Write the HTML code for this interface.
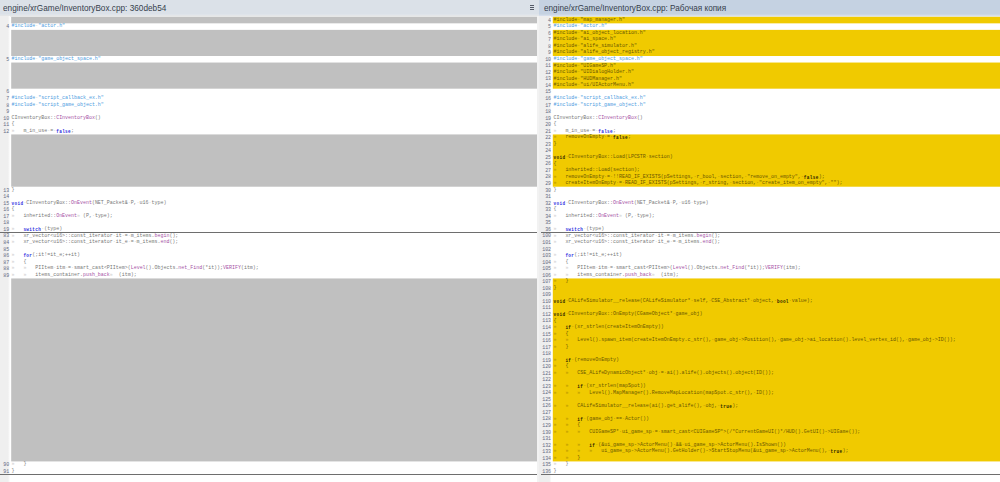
<!DOCTYPE html><html><head><meta charset="utf-8"><style>
html,body{margin:0;padding:0;width:1000px;height:482px;overflow:hidden;background:#fff;position:relative}
.hdr{position:absolute;top:0;height:15px;font-family:"Liberation Sans",sans-serif;white-space:nowrap;overflow:hidden}
.hdr .t{position:absolute;top:0.9px;font-size:9.3px;line-height:15px;color:#363f4c;transform-origin:0 0}
.hl{left:0;width:539px}
.hr{left:539px;width:461px}
.strip{position:absolute;top:15px;height:1.3px}
.gut{position:absolute;top:16.3px;bottom:0}
.ln{position:absolute;height:7.4402px;font-family:"Liberation Mono",monospace;font-size:4.8px;line-height:7.4402px;color:#646c84;text-align:right;transform:scaleX(1.0340);transform-origin:100% 0}
.ln.l{left:0;width:9.2px}
.ln.r{left:539px;width:12.1px}
.bg{position:absolute}
.lg{left:11.2px;width:525.8px;background:#c0c0c0}
.ry{left:552.8px;width:447.2px;background:#f0ca00}
.code{position:absolute;height:7.0668px;font-family:"Liberation Mono",monospace;font-size:5.5px;line-height:7.0668px;white-space:pre;color:#787878;padding-left:0.53px;transform:scaleX(0.9024);transform-origin:0 0}
.lc{left:11px;}
.rc{left:553px;}
.code b{font-weight:normal}
.code .k{font-weight:bold;color:#2a2ae0;position:relative;top:0.9px;font-size:4.8px;letter-spacing:0.420px}
.code .p{color:#4d9be0}
.code .f{color:#a552a5}
.code i{font-style:normal;color:#cdcdcd}
.code.y, .code.y b{color:#6c5800}
.code.y .k{color:#2a2200}
.code.y i{color:#b49400}
.div{position:absolute;height:1px;background:#5a5a5a}
.clipL{position:absolute;left:0;top:0;width:537px;height:482px;overflow:hidden}
</style></head><body>
<svg style="position:absolute;left:0;top:0" width="1000" height="482" shape-rendering="geometricPrecision"><rect x="0" y="0" width="539" height="14.9" fill="#dbe1e8"/><rect x="539" y="0" width="461" height="14.9" fill="#c5d2e2"/><rect x="0" y="14.9" width="539" height="1.7" fill="#e4e6e8"/><rect x="539" y="14.9" width="461" height="1.7" fill="#d6deec"/><rect x="552.8" y="16.800" width="447.2" height="6.535" fill="#f0ca00"/><rect x="552.8" y="29.870" width="447.2" height="26.140" fill="#f0ca00"/><rect x="552.8" y="62.545" width="447.2" height="26.140" fill="#f0ca00"/><rect x="552.8" y="134.430" width="447.2" height="52.280" fill="#f0ca00"/><rect x="11.2" y="16.800" width="525.8" height="6.535" fill="#c0c0c0"/><rect x="11.2" y="29.870" width="525.8" height="26.140" fill="#c0c0c0"/><rect x="11.2" y="62.545" width="525.8" height="26.140" fill="#c0c0c0"/><rect x="11.2" y="134.430" width="525.8" height="52.280" fill="#c0c0c0"/><rect x="552.8" y="278.445" width="447.2" height="182.980" fill="#f0ca00"/><rect x="11.2" y="278.445" width="525.8" height="182.980" fill="#c0c0c0"/></svg>
<div class="hdr hl"><span class="t" style="left:3px;transform:scaleX(0.885)">engine/xrGame/InventoryBox.cpp: 360deb54</span>
<span style="position:absolute;left:529.9px;top:5.1px;width:4.2px;height:5px">
<span style="position:absolute;left:0;top:0;width:4.2px;height:0.8px;background:#555a66"></span>
<span style="position:absolute;left:0;top:2px;width:4.2px;height:0.8px;background:#555a66"></span>
<span style="position:absolute;left:0;top:4px;width:4.2px;height:0.8px;background:#555a66"></span></span></div>
<div class="hdr hr"><span class="t" style="left:5px;transform:scaleX(0.881)">engine/xrGame/InventoryBox.cpp: Рабочая копия</span></div>
<div class="gut" style="left:0;width:10.2px;background:linear-gradient(to right,#efefef 0,#efefef 8px,#fff 10.2px)"></div>
<div class="gut" style="left:537px;width:2px;background:#f2f2f2"></div>
<div class="gut" style="left:539px;width:12.4px;background:linear-gradient(to right,#eeeeee 0,#eeeeee 10.4px,#fff 12.4px)"></div>
<div class="ln r" style="top:17px">4</div><div class="code rc y" style="top:16px"><b class="p">#include</b><i class="ws">&#183;</i><b class="p">&quot;map_manager.h&quot;</b></div><div class="ln r" style="top:23px">5</div><div class="code rc w" style="top:22px"><b class="p">#include</b><i class="ws">&#183;</i><b class="p">&quot;actor.h&quot;</b></div><div class="ln l" style="top:23px">4</div><div class="code lc w" style="top:22px"><b class="p">#include</b><i class="ws">&#183;</i><b class="p">&quot;actor.h&quot;</b></div><div class="ln r" style="top:30px">6</div><div class="code rc y" style="top:29px"><b class="p">#include</b><i class="ws">&#183;</i><b class="p">&quot;ai_object_location.h&quot;</b></div><div class="ln r" style="top:36px">7</div><div class="code rc y" style="top:35px"><b class="p">#include</b><i class="ws">&#183;</i><b class="p">&quot;ai_space.h&quot;</b></div><div class="ln r" style="top:43px">8</div><div class="code rc y" style="top:42px"><b class="p">#include</b><i class="ws">&#183;</i><b class="p">&quot;alife_simulator.h&quot;</b></div><div class="ln r" style="top:49px">9</div><div class="code rc y" style="top:48px"><b class="p">#include</b><i class="ws">&#183;</i><b class="p">&quot;alife_object_registry.h&quot;</b></div><div class="ln r" style="top:56px">10</div><div class="code rc w" style="top:55px"><b class="p">#include</b><i class="ws">&#183;</i><b class="p">&quot;game_object_space.h&quot;</b></div><div class="ln l" style="top:56px">5</div><div class="code lc w" style="top:55px"><b class="p">#include</b><i class="ws">&#183;</i><b class="p">&quot;game_object_space.h&quot;</b></div><div class="ln r" style="top:62px">11</div><div class="code rc y" style="top:62px"><b class="p">#include</b><i class="ws">&#183;</i><b class="p">&quot;UIGameSP.h&quot;</b></div><div class="ln r" style="top:69px">12</div><div class="code rc y" style="top:68px"><b class="p">#include</b><i class="ws">&#183;</i><b class="p">&quot;UIDialogHolder.h&quot;</b></div><div class="ln r" style="top:75px">13</div><div class="code rc y" style="top:75px"><b class="p">#include</b><i class="ws">&#183;</i><b class="p">&quot;HUDManager.h&quot;</b></div><div class="ln r" style="top:82px">14</div><div class="code rc y" style="top:81px"><b class="p">#include</b><i class="ws">&#183;</i><b class="p">&quot;ui/UIActorMenu.h&quot;</b></div><div class="ln r" style="top:88px">15</div><div class="ln l" style="top:88px">6</div><div class="ln r" style="top:95px">16</div><div class="code rc w" style="top:94px"><b class="p">#include</b><i class="ws">&#183;</i><b class="p">&quot;script_callback_ex.h&quot;</b></div><div class="ln l" style="top:95px">7</div><div class="code lc w" style="top:94px"><b class="p">#include</b><i class="ws">&#183;</i><b class="p">&quot;script_callback_ex.h&quot;</b></div><div class="ln r" style="top:102px">17</div><div class="code rc w" style="top:101px"><b class="p">#include</b><i class="ws">&#183;</i><b class="p">&quot;script_game_object.h&quot;</b></div><div class="ln l" style="top:102px">8</div><div class="code lc w" style="top:101px"><b class="p">#include</b><i class="ws">&#183;</i><b class="p">&quot;script_game_object.h&quot;</b></div><div class="ln r" style="top:108px">18</div><div class="ln l" style="top:108px">9</div><div class="ln r" style="top:115px">19</div><div class="code rc w" style="top:114px">CInventoryBox::<b class="f">CInventoryBox</b>()</div><div class="ln l" style="top:115px">10</div><div class="code lc w" style="top:114px">CInventoryBox::<b class="f">CInventoryBox</b>()</div><div class="ln r" style="top:121px">20</div><div class="code rc w" style="top:120px">{</div><div class="ln l" style="top:121px">11</div><div class="code lc w" style="top:120px">{</div><div class="ln r" style="top:128px">21</div><div class="code rc w" style="top:127px"><i class="ws">&#187;</i>   m_in_use<i class="ws">&#183;</i>=<i class="ws">&#183;</i><b class="k">false</b>;</div><div class="ln l" style="top:128px">12</div><div class="code lc w" style="top:127px"><i class="ws">&#187;</i>   m_in_use<i class="ws">&#183;</i>=<i class="ws">&#183;</i><b class="k">false</b>;</div><div class="ln r" style="top:134px">22</div><div class="code rc y" style="top:133px"><i class="ws">&#187;</i>   removeOnEmpty<i class="ws">&#183;</i>=<i class="ws">&#183;</i><b class="k">false</b>;</div><div class="ln r" style="top:141px">23</div><div class="code rc y" style="top:140px">}</div><div class="ln r" style="top:147px">24</div><div class="ln r" style="top:154px">25</div><div class="code rc y" style="top:153px"><b class="k">void</b><i class="ws">&#183;</i>CInventoryBox::Load(LPCSTR<i class="ws">&#183;</i>section)</div><div class="ln r" style="top:160px">26</div><div class="code rc y" style="top:160px">{</div><div class="ln r" style="top:167px">27</div><div class="code rc y" style="top:166px"><i class="ws">&#187;</i>   inherited::Load(section);</div><div class="ln r" style="top:173px">28</div><div class="code rc y" style="top:173px"><i class="ws">&#187;</i>   removeOnEmpty<i class="ws">&#183;</i>=<i class="ws">&#183;</i>!!READ_IF_EXISTS(pSettings,<i class="ws">&#183;</i>r_bool,<i class="ws">&#183;</i>section,<i class="ws">&#183;</i><b class="p">&quot;remove_on_empty&quot;</b>,<i class="ws">&#183;</i><b class="k">false</b>);</div><div class="ln r" style="top:180px">29</div><div class="code rc y" style="top:179px"><i class="ws">&#187;</i>   createItemOnEmpty<i class="ws">&#183;</i>=<i class="ws">&#183;</i>READ_IF_EXISTS(pSettings,<i class="ws">&#183;</i>r_string,<i class="ws">&#183;</i>section,<i class="ws">&#183;</i><b class="p">&quot;create_item_on_empty&quot;</b>,<i class="ws">&#183;</i><b class="p">&quot;&quot;</b>);</div><div class="ln r" style="top:187px">30</div><div class="code rc w" style="top:186px">}</div><div class="ln l" style="top:187px">13</div><div class="code lc w" style="top:186px">}</div><div class="ln r" style="top:193px">31</div><div class="ln l" style="top:193px">14</div><div class="ln r" style="top:200px">32</div><div class="code rc w" style="top:199px"><b class="k">void</b><i class="ws">&#183;</i>CInventoryBox::<b class="f">OnEvent</b>(NET_Packet&amp;<i class="ws">&#183;</i>P,<i class="ws">&#183;</i>u16<i class="ws">&#183;</i>type)</div><div class="ln l" style="top:200px">15</div><div class="code lc w" style="top:199px"><b class="k">void</b><i class="ws">&#183;</i>CInventoryBox::<b class="f">OnEvent</b>(NET_Packet&amp;<i class="ws">&#183;</i>P,<i class="ws">&#183;</i>u16<i class="ws">&#183;</i>type)</div><div class="ln r" style="top:206px">33</div><div class="code rc w" style="top:205px">{</div><div class="ln l" style="top:206px">16</div><div class="code lc w" style="top:205px">{</div><div class="ln r" style="top:213px">34</div><div class="code rc w" style="top:212px"><i class="ws">&#187;</i>   inherited::<b class="f">OnEvent</b><i class="ws">&#187;</i> (P,<i class="ws">&#183;</i>type);</div><div class="ln l" style="top:213px">17</div><div class="code lc w" style="top:212px"><i class="ws">&#187;</i>   inherited::<b class="f">OnEvent</b><i class="ws">&#187;</i> (P,<i class="ws">&#183;</i>type);</div><div class="ln r" style="top:219px">35</div><div class="ln l" style="top:219px">18</div><div class="ln r" style="top:226px">36</div><div class="code rc w" style="top:225px"><i class="ws">&#187;</i>   <b class="k">switch</b><i class="ws">&#183;</i>(type)</div><div class="ln l" style="top:226px">19</div><div class="code lc w" style="top:225px"><i class="ws">&#187;</i>   <b class="k">switch</b><i class="ws">&#183;</i>(type)</div><div class="ln r" style="top:232px">100</div><div class="code rc w" style="top:232px"><i class="ws">&#187;</i>   xr_vector&lt;u16&gt;::const_iterator<i class="ws">&#183;</i>it<i class="ws">&#183;</i>=<i class="ws">&#183;</i>m_items.<b class="f">begin</b>();</div><div class="ln l" style="top:232px">83</div><div class="code lc w" style="top:232px"><i class="ws">&#187;</i>   xr_vector&lt;u16&gt;::const_iterator<i class="ws">&#183;</i>it<i class="ws">&#183;</i>=<i class="ws">&#183;</i>m_items.<b class="f">begin</b>();</div><div class="ln r" style="top:239px">101</div><div class="code rc w" style="top:238px"><i class="ws">&#187;</i>   xr_vector&lt;u16&gt;::const_iterator<i class="ws">&#183;</i>it_e<i class="ws">&#183;</i>=<i class="ws">&#183;</i>m_items.<b class="f">end</b>();</div><div class="ln l" style="top:239px">84</div><div class="code lc w" style="top:238px"><i class="ws">&#187;</i>   xr_vector&lt;u16&gt;::const_iterator<i class="ws">&#183;</i>it_e<i class="ws">&#183;</i>=<i class="ws">&#183;</i>m_items.<b class="f">end</b>();</div><div class="ln r" style="top:246px">102</div><div class="ln l" style="top:246px">85</div><div class="ln r" style="top:252px">103</div><div class="code rc w" style="top:251px"><i class="ws">&#187;</i>   <b class="k">for</b>(;it!=it_e;++it)</div><div class="ln l" style="top:252px">86</div><div class="code lc w" style="top:251px"><i class="ws">&#187;</i>   <b class="k">for</b>(;it!=it_e;++it)</div><div class="ln r" style="top:259px">104</div><div class="code rc w" style="top:258px"><i class="ws">&#187;</i>   {</div><div class="ln l" style="top:259px">87</div><div class="code lc w" style="top:258px"><i class="ws">&#187;</i>   {</div><div class="ln r" style="top:265px">105</div><div class="code rc w" style="top:264px"><i class="ws">&#187;</i>   <i class="ws">&#187;</i>   PIItem<i class="ws">&#183;</i>itm<i class="ws">&#183;</i>=<i class="ws">&#183;</i>smart_cast&lt;PIItem&gt;(<b class="f">Level</b>().Objects.<b class="f">net_Find</b>(*it));<b class="f">VERIFY</b>(itm);</div><div class="ln l" style="top:265px">88</div><div class="code lc w" style="top:264px"><i class="ws">&#187;</i>   <i class="ws">&#187;</i>   PIItem<i class="ws">&#183;</i>itm<i class="ws">&#183;</i>=<i class="ws">&#183;</i>smart_cast&lt;PIItem&gt;(<b class="f">Level</b>().Objects.<b class="f">net_Find</b>(*it));<b class="f">VERIFY</b>(itm);</div><div class="ln r" style="top:272px">106</div><div class="code rc w" style="top:271px"><i class="ws">&#187;</i>   <i class="ws">&#187;</i>   items_container.<b class="f">push_back</b><i class="ws">&#187;</i>  (itm);</div><div class="ln l" style="top:272px">89</div><div class="code lc w" style="top:271px"><i class="ws">&#187;</i>   <i class="ws">&#187;</i>   items_container.<b class="f">push_back</b><i class="ws">&#187;</i>  (itm);</div><div class="ln r" style="top:278px">107</div><div class="code rc y" style="top:277px"><i class="ws">&#187;</i>   }</div><div class="ln r" style="top:285px">108</div><div class="code rc y" style="top:284px">}</div><div class="ln r" style="top:291px">109</div><div class="ln r" style="top:298px">110</div><div class="code rc y" style="top:297px"><b class="k">void</b><i class="ws">&#183;</i>CALifeSimulator__release(CALifeSimulator*<i class="ws">&#183;</i>self,<i class="ws">&#183;</i>CSE_Abstract*<i class="ws">&#183;</i>object,<i class="ws">&#183;</i><b class="k">bool</b><i class="ws">&#183;</i>value);</div><div class="ln r" style="top:304px">111</div><div class="ln r" style="top:311px">112</div><div class="code rc y" style="top:310px"><b class="k">void</b><i class="ws">&#183;</i>CInventoryBox::OnEmpty(CGameObject*<i class="ws">&#183;</i>game_obj)</div><div class="ln r" style="top:317px">113</div><div class="code rc y" style="top:317px">{</div><div class="ln r" style="top:324px">114</div><div class="code rc y" style="top:323px"><i class="ws">&#187;</i>   <b class="k">if</b><i class="ws">&#183;</i>(xr_strlen(createItemOnEmpty))</div><div class="ln r" style="top:331px">115</div><div class="code rc y" style="top:330px"><i class="ws">&#187;</i>   {</div><div class="ln r" style="top:337px">116</div><div class="code rc y" style="top:336px"><i class="ws">&#187;</i>   <i class="ws">&#187;</i>   <b class="f">Level</b>().spawn_item(createItemOnEmpty.c_str(),<i class="ws">&#183;</i>game_obj-&gt;Position(),<i class="ws">&#183;</i>game_obj-&gt;ai_location().level_vertex_id(),<i class="ws">&#183;</i>game_obj-&gt;ID());</div><div class="ln r" style="top:344px">117</div><div class="code rc y" style="top:343px"><i class="ws">&#187;</i>   }</div><div class="ln r" style="top:350px">118</div><div class="ln r" style="top:357px">119</div><div class="code rc y" style="top:356px"><i class="ws">&#187;</i>   <b class="k">if</b><i class="ws">&#183;</i>(removeOnEmpty)</div><div class="ln r" style="top:363px">120</div><div class="code rc y" style="top:362px"><i class="ws">&#187;</i>   {</div><div class="ln r" style="top:370px">121</div><div class="code rc y" style="top:369px"><i class="ws">&#187;</i>   <i class="ws">&#187;</i>   CSE_ALifeDynamicObject*<i class="ws">&#183;</i>obj<i class="ws">&#183;</i>=<i class="ws">&#183;</i>ai().alife().objects().object(ID());</div><div class="ln r" style="top:376px">122</div><div class="ln r" style="top:383px">123</div><div class="code rc y" style="top:382px"><i class="ws">&#187;</i>   <i class="ws">&#187;</i>   <b class="k">if</b><i class="ws">&#183;</i>(xr_strlen(mapSpot))</div><div class="ln r" style="top:389px">124</div><div class="code rc y" style="top:389px"><i class="ws">&#187;</i>   <i class="ws">&#187;</i>   <i class="ws">&#187;</i>   <b class="f">Level</b>().MapManager().RemoveMapLocation(mapSpot.c_str(),<i class="ws">&#183;</i>ID());</div><div class="ln r" style="top:396px">125</div><div class="ln r" style="top:402px">126</div><div class="code rc y" style="top:402px"><i class="ws">&#187;</i>   <i class="ws">&#187;</i>   CALifeSimulator__release(ai().get_alife(),<i class="ws">&#183;</i>obj,<i class="ws">&#183;</i><b class="k">true</b>);</div><div class="ln r" style="top:409px">127</div><div class="ln r" style="top:415px">128</div><div class="code rc y" style="top:415px"><i class="ws">&#187;</i>   <i class="ws">&#187;</i>   <b class="k">if</b><i class="ws">&#183;</i>(game_obj<i class="ws">&#183;</i>==<i class="ws">&#183;</i>Actor())</div><div class="ln r" style="top:422px">129</div><div class="code rc y" style="top:421px"><i class="ws">&#187;</i>   <i class="ws">&#187;</i>   {</div><div class="ln r" style="top:429px">130</div><div class="code rc y" style="top:428px"><i class="ws">&#187;</i>   <i class="ws">&#187;</i>   <i class="ws">&#187;</i>   CUIGameSP*<i class="ws">&#183;</i>ui_game_sp<i class="ws">&#183;</i>=<i class="ws">&#183;</i>smart_cast&lt;CUIGameSP*&gt;(/*CurrentGameUI()*/HUD().GetUI()-&gt;UIGame());</div><div class="ln r" style="top:435px">131</div><div class="ln r" style="top:442px">132</div><div class="code rc y" style="top:441px"><i class="ws">&#187;</i>   <i class="ws">&#187;</i>   <i class="ws">&#187;</i>   <b class="k">if</b><i class="ws">&#183;</i>(&amp;ui_game_sp-&gt;ActorMenu()<i class="ws">&#183;</i>&amp;&amp;<i class="ws">&#183;</i>ui_game_sp-&gt;ActorMenu().IsShown())</div><div class="ln r" style="top:448px">133</div><div class="code rc y" style="top:447px"><i class="ws">&#187;</i>   <i class="ws">&#187;</i>   <i class="ws">&#187;</i>   <i class="ws">&#187;</i>   ui_game_sp-&gt;ActorMenu().GetHolder()-&gt;StartStopMenu(&amp;ui_game_sp-&gt;ActorMenu(),<i class="ws">&#183;</i><b class="k">true</b>);</div><div class="ln r" style="top:455px">134</div><div class="code rc y" style="top:454px"><i class="ws">&#187;</i>   <i class="ws">&#187;</i>   }</div><div class="ln r" style="top:461px">135</div><div class="code rc w" style="top:460px"><i class="ws">&#187;</i>   }</div><div class="ln l" style="top:461px">90</div><div class="code lc w" style="top:460px"><i class="ws">&#187;</i>   }</div><div class="ln r" style="top:468px">136</div><div class="code rc w" style="top:467px">}</div><div class="ln l" style="top:468px">91</div><div class="code lc w" style="top:467px">}</div>
<svg style="position:absolute;left:0;top:0" width="1000" height="482"><rect x="0" y="232" width="537" height="1" fill="#6e6e6e"/><rect x="541" y="232" width="459" height="1" fill="#6e6e6e"/><rect x="0" y="474" width="537" height="1" fill="#6e6e6e"/><rect x="541" y="474" width="459" height="1" fill="#6e6e6e"/></svg>
</body></html>
